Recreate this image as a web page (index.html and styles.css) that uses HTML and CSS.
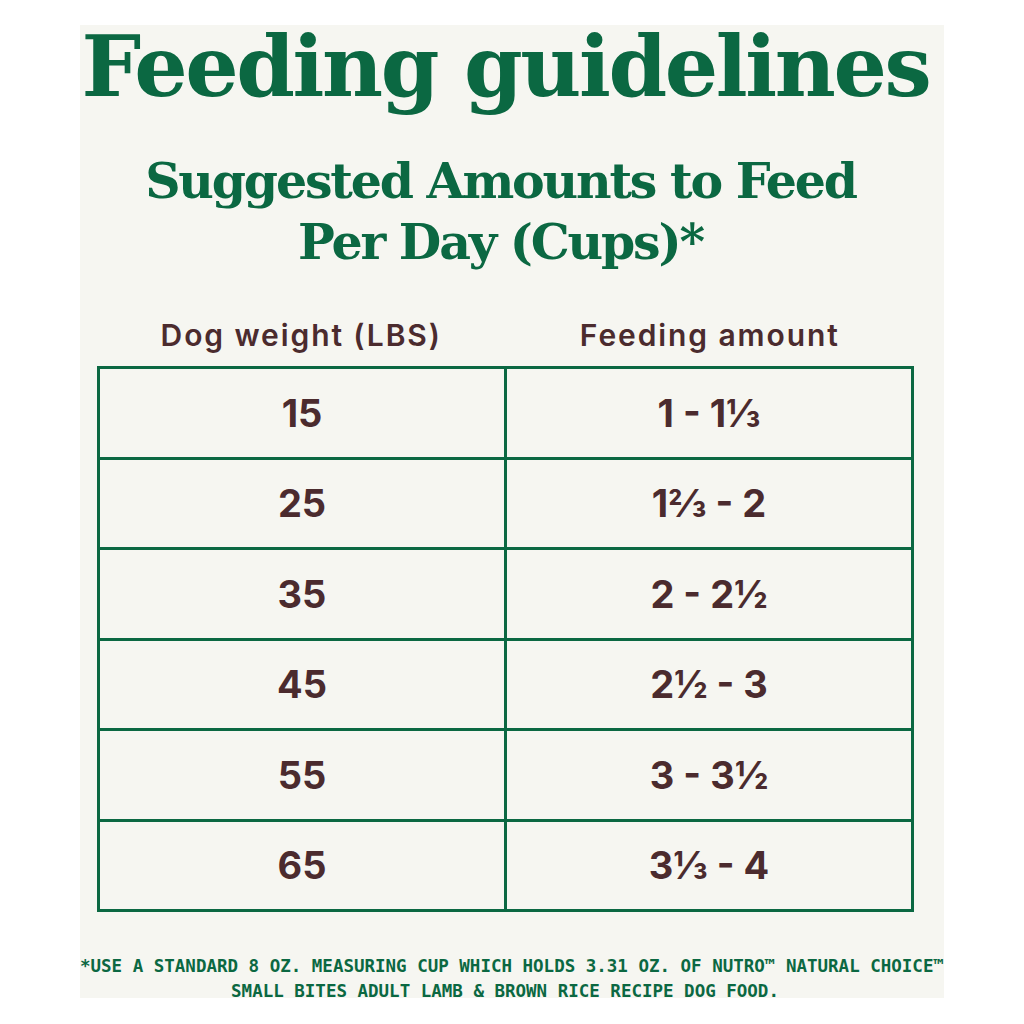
FILE: index.html
```html
<!DOCTYPE html>
<html lang="en">
<head>
<meta charset="utf-8">
<title>Feeding guidelines</title>
<link rel="stylesheet" href="styles.css">
</head>
<body>
<main class="panel">
  <div class="content">
    <h1 class="title">Feeding guidelines</h1>
    <h2 class="subtitle">Suggested Amounts to Feed<br>Per Day (Cups)*</h2>
    <div class="heads">
      <div class="head">Dog weight (LBS)</div>
      <div class="head">Feeding amount</div>
    </div>
    <div class="table">
      <div class="cell">15</div><div class="cell">1 - 1⅓</div>
      <div class="cell">25</div><div class="cell">1⅔ - 2</div>
      <div class="cell">35</div><div class="cell">2 - 2½</div>
      <div class="cell">45</div><div class="cell">2½ - 3</div>
      <div class="cell">55</div><div class="cell">3 - 3½</div>
      <div class="cell">65</div><div class="cell">3⅓ - 4</div>
    </div>
  </div>
  <footer class="note">
    <div class="note-line">*USE A STANDARD 8 OZ. MEASURING CUP WHICH HOLDS 3.31 OZ. OF NUTRO™ NATURAL CHOICE™</div>
    <div class="note-line shifted">SMALL BITES ADULT LAMB &amp; BROWN RICE RECIPE DOG FOOD.</div>
  </footer>
</main>
</body>
</html>
```
FILE: styles.css
```css
html, body {
  margin: 0;
  padding: 0;
  background: #ffffff;
}
.panel {
  width: 864px;
  height: 973px;
  margin: 25px 0 0 80px;
  background: #f6f6f1;
  display: flex;
  flex-direction: column;
}
.content {
  padding: 0 30px 0 17px;
  display: flex;
  flex-direction: column;
  align-items: center;
}
.title {
  margin: -3px 0 0;
  font-family: "DejaVu Serif", serif;
  font-weight: 700;
  font-size: 84px;
  letter-spacing: -2.4px;
  line-height: 90px;
  color: #0b6842;
  white-space: nowrap;
}
.subtitle {
  margin: 39px 10px 0 0;
  font-family: "DejaVu Serif", serif;
  font-weight: 700;
  font-size: 49px;
  letter-spacing: -2.2px;
  line-height: 61px;
  color: #0b6842;
  text-align: center;
}
.heads {
  margin-top: 44px;
  width: 100%;
  display: grid;
  grid-template-columns: 1fr 1fr;
}
.head {
  font-family: Inter, sans-serif;
  font-weight: 600;
  font-size: 30px;
  letter-spacing: 1.9px;
  line-height: 36px;
  color: #4b2b2e;
  text-align: center;
}
.table {
  margin-top: 13px;
  width: 100%;
  box-sizing: border-box;
  display: grid;
  grid-template-columns: 1fr 1fr;
  grid-auto-rows: 90.5px;
  border-top: 3px solid #0b6842;
  border-left: 3px solid #0b6842;
}
.cell {
  border-right: 3px solid #0b6842;
  border-bottom: 3px solid #0b6842;
  display: flex;
  align-items: center;
  justify-content: center;
  font-family: Inter, sans-serif;
  font-weight: 700;
  font-size: 38px;
  color: #4b2b2e;
}
.note {
  margin-top: auto;
  margin-bottom: -6px;
  font-family: "DejaVu Sans Mono", monospace;
  font-weight: 700;
  font-size: 17.5px;
  line-height: 25px;
  color: #0b6842;
  text-align: center;
  white-space: nowrap;
}
.shifted {
  margin-right: 14px;
}
```
